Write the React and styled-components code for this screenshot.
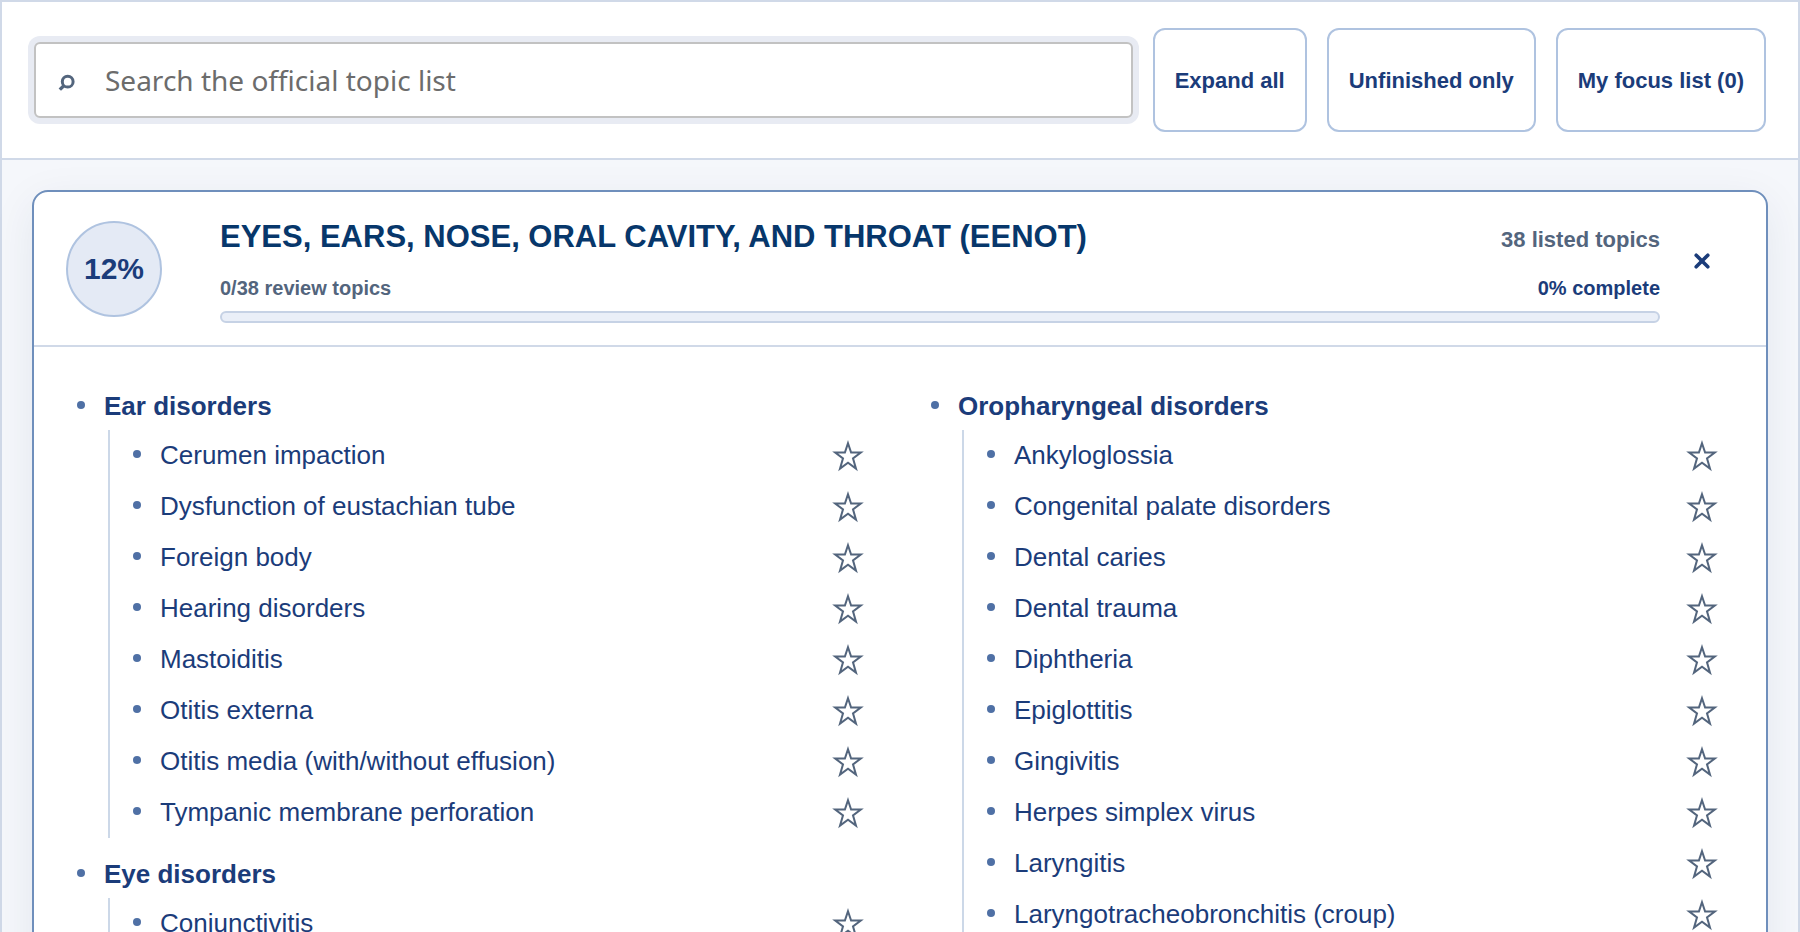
import { useState } from 'react';
import styled, { createGlobalStyle } from 'styled-components';

const colors = {
  navy: '#1b3c7a',
  title: '#07376b',
  slate: '#53657d',
  line: '#d0d9e8',
  control: '#afc3e0',
  card: '#6f8fbc',
  bullet: '#4f70a5',
  page: '#f5f7fb',
};

const GlobalStyle = createGlobalStyle`
  * {
    box-sizing: border-box;
  }

  html {
    scrollbar-width: none;
  }

  body {
    margin: 0;
    background: ${colors.page};
    color: ${colors.navy};
    font-family: "Liberation Sans", Arial, sans-serif;
  }

  button {
    border: 0;
    padding: 0;
    background: none;
    color: inherit;
    font: inherit;
    cursor: pointer;
  }

  ul {
    list-style: none;
    margin: 0;
    padding: 0;
  }
`;

const Shell = styled.main`
  min-height: 100vh;
  border: 2px solid ${colors.line};
`;

const Toolbar = styled.div`
  display: flex;
  align-items: center;
  gap: 20px;
  padding: 26px 32px;
  background: #fff;
  border-bottom: 2px solid ${colors.line};
`;

const SearchBox = styled.label`
  flex: 1;
  display: flex;
  align-items: center;
  gap: 25px;
  height: 76px;
  padding: 0 22px;
  border: 2px solid #c2c2c2;
  border-radius: 6px;
  background: #fff;
  box-shadow: 0 0 0 6px #e8ebf3;
  color: ${colors.slate};
`;

const SearchInput = styled.input`
  flex: 1;
  min-width: 0;
  height: 100%;
  padding: 0;
  border: 0;
  outline: 0;
  background: transparent;
  color: ${colors.navy};
  font-family: "Noto Sans", sans-serif;
  font-size: 28px;

  &::placeholder {
    color: #6c6c6c;
    opacity: 1;
  }
`;

const ToolbarButton = styled.button`
  height: 104px;
  padding: 2px 20px 0;
  border: 2px solid ${colors.control};
  border-radius: 12px;
  background: #fff;
  font-size: 22px;
  font-weight: 700;
  white-space: nowrap;
`;

const Content = styled.div`
  padding: 30px;
`;

const Card = styled.section`
  background: #fff;
  border: 2px solid ${colors.card};
  border-radius: 16px;
  box-shadow: 0 12px 44px rgba(20, 50, 90, 0.08);
`;

const CardHeader = styled.header`
  display: flex;
  align-items: flex-start;
  padding: 29px 32px 22px;
  border-bottom: 2px solid ${colors.line};
`;

const Score = styled.div`
  display: flex;
  align-items: center;
  justify-content: center;
  flex: none;
  width: 96px;
  height: 96px;
  margin-right: 58px;
  border: 2px solid ${colors.control};
  border-radius: 50%;
  background: #e4eaf5;
  font-size: 30px;
  font-weight: 700;
`;

const Summary = styled.div`
  flex: 1;
  min-width: 0;
`;

const SummaryRow = styled.div`
  display: flex;
  align-items: baseline;
  justify-content: space-between;
  gap: 20px;
`;

const Title = styled.h2`
  margin: 0;
  color: ${colors.title};
  font-size: 31px;
  line-height: 32px;
`;

const Meta = styled.span`
  color: ${(props) => (props.$strong ? colors.navy : colors.slate)};
  font-size: ${(props) => (props.$large ? 22 : 20)}px;
  font-weight: 700;
  line-height: 24px;
`;

const Progress = styled.div`
  height: 12px;
  margin-top: 11px;
  border: 2px solid #c6d2e5;
  border-radius: 6px;
  background: #eaeff8;
  overflow: hidden;
`;

const ProgressFill = styled.div`
  height: 100%;
  background: ${colors.navy};
`;

const ProgressText = styled(SummaryRow)`
  margin-top: 23px;
`;

const IconButton = styled.button`
  display: flex;
  align-items: center;
  justify-content: center;
  flex: none;
  width: 64px;
  color: ${colors.slate};
`;

const CloseButton = styled(IconButton)`
  height: 80px;
  margin-left: 10px;
  color: ${colors.navy};
`;

const Columns = styled.div`
  display: grid;
  grid-template-columns: 1fr 1fr;
  gap: 40px;
  padding: 32px;
`;

const Group = styled.section`
  & + & {
    margin-top: 9px;
  }
`;

const Bullet = styled.span`
  flex: none;
  width: 8px;
  height: 8px;
  margin: 0 19px 3px 0;
  border-radius: 50%;
  background: ${colors.bullet};
`;

const GroupTitle = styled.h3`
  display: flex;
  align-items: center;
  margin: 0;
  padding: 10px 0 6px 11px;
  font-size: 26px;
  line-height: 35px;
`;

const TopicList = styled.ul`
  && {
    margin-left: 42px;
  }
  border-left: 2px solid #ccd8e8;
`;

const Topic = styled.li`
  display: flex;
  align-items: center;
  padding-left: 23px;
  font-size: 26px;
  line-height: 35px;
`;

const TopicName = styled.span`
  flex: 1;
  padding: 8px 0;
`;

const columns = [
  [
    {
      name: 'Ear disorders',
      topics: [
        'Cerumen impaction',
        'Dysfunction of eustachian tube',
        'Foreign body',
        'Hearing disorders',
        'Mastoiditis',
        'Otitis externa',
        'Otitis media (with/without effusion)',
        'Tympanic membrane perforation',
      ],
    },
    { name: 'Eye disorders', topics: ['Conjunctivitis'] },
  ],
  [
    {
      name: 'Oropharyngeal disorders',
      topics: [
        'Ankyloglossia',
        'Congenital palate disorders',
        'Dental caries',
        'Dental trauma',
        'Diphtheria',
        'Epiglottitis',
        'Gingivitis',
        'Herpes simplex virus',
        'Laryngitis',
        'Laryngotracheobronchitis (croup)',
      ],
    },
  ],
];

const SearchIcon = () => (
  <svg width="22" height="22" viewBox="0 0 22 22" fill="none" stroke="currentColor" strokeWidth="3" aria-hidden="true">
    <circle cx="9.7" cy="12.7" r="5.4" />
    <path d="M5.8 16.7 1.8 20.6" strokeWidth="3.4" />
  </svg>
);

const CloseIcon = () => (
  <svg width="16" height="16" viewBox="0 0 16 16" fill="none" stroke="currentColor" strokeWidth="3.6" strokeLinecap="round" aria-hidden="true">
    <path d="M2.2 2.2l11.6 11.6M13.8 2.2 2.2 13.8" />
  </svg>
);

const StarIcon = ({ filled }) => (
  <svg width="32" height="32" viewBox="0 0 32 32" fill={filled ? 'currentColor' : 'none'} stroke="currentColor" strokeWidth="2" aria-hidden="true">
    <path d="M16 3.2 19.1 12.6H28.8L21 18.4 24 28.6 16 22.8 8 28.6 11 18.4 3.2 12.6H12.9Z" />
  </svg>
);

function App() {
  const [query, setQuery] = useState('');
  const [focused, setFocused] = useState([]);

  const toggleFocus = (topic) => {
    setFocused((list) => (list.includes(topic) ? list.filter((t) => t !== topic) : [...list, topic]));
  };

  const matches = (topic) => topic.toLowerCase().includes(query.toLowerCase());

  return (
    <Shell>
      <GlobalStyle />
      <Toolbar>
        <SearchBox>
          <SearchIcon />
          <SearchInput
            type="text"
            aria-label="Search the official topic list"
            placeholder="Search the official topic list"
            value={query}
            onChange={(e) => setQuery(e.target.value)}
          />
        </SearchBox>
        <ToolbarButton type="button">Expand all</ToolbarButton>
        <ToolbarButton type="button">Unfinished only</ToolbarButton>
        <ToolbarButton type="button">My focus list ({focused.length})</ToolbarButton>
      </Toolbar>

      <Content>
        <Card>
          <CardHeader>
            <Score>12%</Score>
            <Summary>
              <SummaryRow>
                <Title>EYES, EARS, NOSE, ORAL CAVITY, AND THROAT (EENOT)</Title>
                <Meta $large>38 listed topics</Meta>
              </SummaryRow>
              <ProgressText>
                <Meta>0/38 review topics</Meta>
                <Meta $strong>0% complete</Meta>
              </ProgressText>
              <Progress role="progressbar" aria-label="Review progress" aria-valuenow={0}>
                <ProgressFill style={{ width: '0%' }} />
              </Progress>
            </Summary>
            <CloseButton type="button" aria-label="Close">
              <CloseIcon />
            </CloseButton>
          </CardHeader>

          <Columns>
            {columns.map((groups) => (
              <div key={groups[0].name}>
                {groups.map((group) => (
                  <Group key={group.name}>
                    <GroupTitle>
                      <Bullet />
                      {group.name}
                    </GroupTitle>
                    <TopicList>
                      {group.topics.filter(matches).map((topic) => (
                        <Topic key={topic}>
                          <Bullet />
                          <TopicName>{topic}</TopicName>
                          <IconButton
                            type="button"
                            aria-label={`Add ${topic} to focus list`}
                            aria-pressed={focused.includes(topic)}
                            onClick={() => toggleFocus(topic)}
                          >
                            <StarIcon filled={focused.includes(topic)} />
                          </IconButton>
                        </Topic>
                      ))}
                    </TopicList>
                  </Group>
                ))}
              </div>
            ))}
          </Columns>
        </Card>
      </Content>
    </Shell>
  );
}

export default App;
